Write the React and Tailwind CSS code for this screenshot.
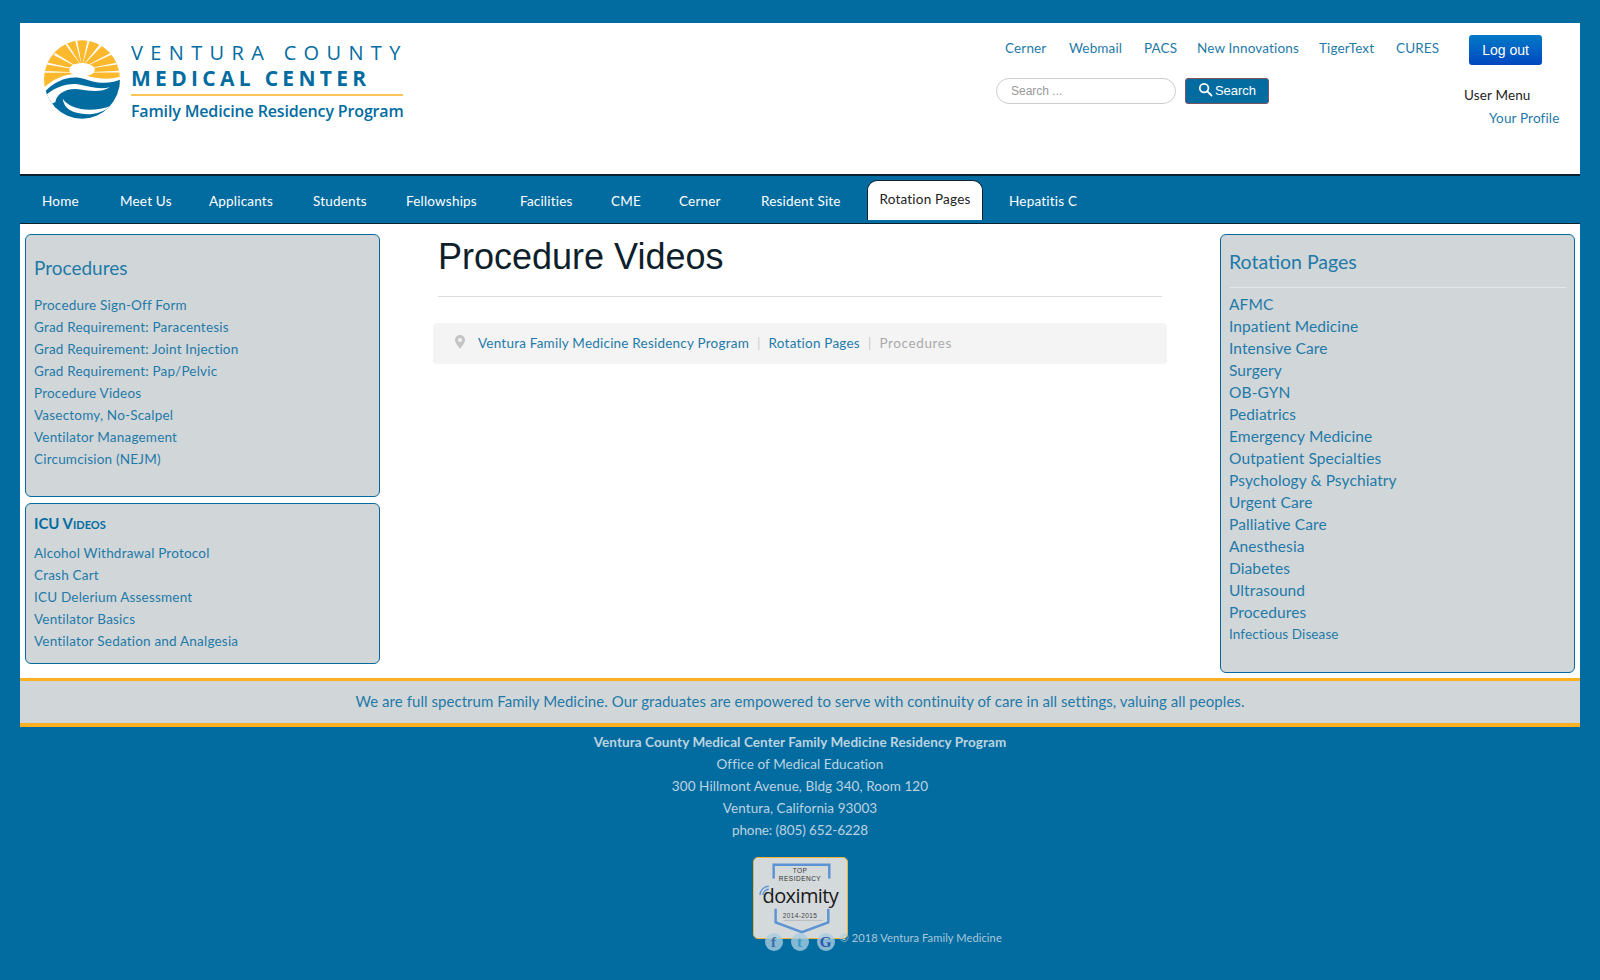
import React from "react";

const leftA = ["Procedure Sign-Off Form","Grad Requirement: Paracentesis","Grad Requirement: Joint Injection","Grad Requirement: Pap/Pelvic","Procedure Videos","Vasectomy, No-Scalpel","Ventilator Management","Circumcision (NEJM)"];
const leftB = ["Alcohol Withdrawal Protocol","Crash Cart","ICU Delerium Assessment","Ventilator Basics","Ventilator Sedation and Analgesia"];
const right = ["AFMC","Inpatient Medicine","Intensive Care","Surgery","OB-GYN","Pediatrics","Emergency Medicine","Outpatient Specialties","Psychology & Psychiatry","Urgent Care","Palliative Care","Anesthesia","Diabetes","Ultrasound","Procedures"];
const nav = [
  ["Home","w-[78px]"],["Meet Us","w-[89px]"],["Applicants","w-[104px]"],["Students","w-[93px]"],["Fellowships","w-[114px]"],
  ["Facilities","w-[91px]"],["CME","w-[68px]"],["Cerner","w-[82px]"],["Resident Site","w-[106px]"],
];

function Logo() {
  return (
    <svg viewBox="72 62 226 234" width="76" height="79" className="shrink-0">
      <defs>
        <clipPath id="c"><ellipse cx="185" cy="179" rx="113" ry="117" /></clipPath>
      </defs>
      <g clipPath="url(#c)">
        <rect x="70" y="60" width="230" height="240" fill="#fff" />
        <rect x="70" y="60" width="230" height="142" fill="#fdb92e" />
        <g fill="#fff">
          <ellipse cx="185" cy="150" rx="38" ry="20" />
          <path d="M185 140L132 70L138 67Z" />
          <path d="M185 140L164 60L170 60Z" />
          <path d="M185 140L202 60L208 62Z" />
          <path d="M185 140L240 72L246 77Z" />
          <path d="M185 145L270 100L274 105Z" />
          <path d="M185 150L295 128L297 133Z" />
          <path d="M185 150L105 100L101 106Z" />
          <path d="M185 152L78 128L76 134Z" />
          <path d="M185 158L298 153L298 158Z" />
          <path d="M185 158L72 154L72 159Z" />
        </g>
        <path d="M70 205C105 172 150 155 195 166C228 176 265 182 298 170L298 190L70 220Z" fill="#fff" />
        <path d="M78 212C108 182 150 164 195 178C228 190 265 194 298 180L298 300L60 300Z" fill="#026ca1" />
        <path d="M70 234C98 202 140 190 172 193C205 198 232 210 268 202C236 222 200 210 165 207C130 207 108 226 106 246L70 264Z" fill="#fff" />
        <path d="M128 236C148 268 212 280 274 256C240 284 200 286 170 278C145 272 130 258 128 236Z" fill="#fff" />
      </g>
    </svg>
  );
}

function Panel({ className, children }) {
  return <div className={"rounded-[6px] border border-[#026ca1] bg-[#d1d6d9] " + className}>{children}</div>;
}

function SearchIcon() {
  return (
    <svg width="15" height="15" viewBox="0 0 16 16" fill="none" stroke="#fff" strokeWidth="1.9" strokeLinecap="round" className="mt-[-3px]">
      <circle cx="6.5" cy="6.5" r="4.6" />
      <path d="M10 10l4.4 4.4" />
    </svg>
  );
}

function Doximity() {
  return (
    <div className="relative h-[82px] w-[95px] overflow-hidden rounded-[5px] border border-[#f0b33c] bg-[#d4d9dc]">
      <svg viewBox="0 0 95 82" width="93" height="80" className="absolute left-0 top-0">
        <path d="M20 21V7H77V21" fill="none" stroke="#5b93d3" strokeWidth="2.5" />
        <path d="M22 52V66L49 76L76 66V52" fill="none" stroke="#5b93d3" strokeWidth="2.5" />
        <path d="M6 38a9 9 0 0 1 9-9" fill="none" stroke="#5b93d3" strokeWidth="1.4" />
        <path d="M9 38a6 6 0 0 1 6-6" fill="none" stroke="#5b93d3" strokeWidth="1.4" />
        <path d="M30 64H70" stroke="#aeb4b8" strokeWidth="0.8" />
      </svg>
      <div className="absolute left-0 right-0 top-[9px] text-center font-['Liberation_Sans',sans-serif] text-[6.5px] leading-[7.5px] tracking-[0.5px] text-[#333]">
        <div>TOP</div>
        <div>RESIDENCY</div>
      </div>
      <div className="absolute left-[9px] top-[26px] font-['Open_Sans',sans-serif] text-[20px] font-medium leading-[24px] tracking-[-0.6px] text-[#1a1a1a]">doximity</div>
      <div className="absolute left-0 right-0 top-[54px] text-center font-['Liberation_Sans',sans-serif] text-[6.5px] leading-[8px] tracking-[0.4px] text-[#444]">2014-2015</div>
    </div>
  );
}

function Social({ children, cls }) {
  return (
    <div className={"flex h-[18px] w-[18px] items-center justify-center rounded-full bg-[#a9cce0]/80 font-['Liberation_Serif',serif] text-[15px] font-bold leading-none " + cls}>
      {children}
    </div>
  );
}

export default function App() {
  return (
    <div className="min-h-[980px] bg-[#026ca1] px-[20px] pt-[23px] font-['Lato',sans-serif] text-[#1f7aa8]">
      {/* header */}
      <header className="flex h-[153px] border-b-2 border-[#0b2233] bg-white">
        <div className="flex h-fit w-[976px] pl-[24px] pt-[17px]">
          <Logo />
          <div className="ml-[11px] mt-[1px] w-[272px] text-[#026ca1]">
            <div className="whitespace-nowrap font-['Open_Sans',sans-serif] text-[20px] leading-[24px] tracking-[7.35px]">VENTURA COUNTY</div>
            <div className="whitespace-nowrap font-['Open_Sans',sans-serif] text-[21px] font-bold leading-[26px] tracking-[4.3px]">MEDICAL CENTER</div>
            <div className="mt-[3px] h-[2px] w-[272px] bg-[#fdc45a]" />
            <div className="mt-[4px] whitespace-nowrap font-['Open_Sans',sans-serif] text-[16px] font-semibold leading-[22px] tracking-[-0.15px]">Family Medicine Residency Program</div>
          </div>
        </div>
        <div className="w-[468px] pt-[17px]">
          <div className="flex pl-[9px] text-[13.5px] leading-[16px] tracking-[0.15px]">
            <a className="w-[64px]">Cerner</a>
            <a className="w-[75px]">Webmail</a>
            <a className="w-[53px]">PACS</a>
            <a className="w-[122px]">New Innovations</a>
            <a className="w-[77px]">TigerText</a>
            <a>CURES</a>
          </div>
          <div className="mt-[22px] flex items-center font-['Liberation_Sans',sans-serif]">
            <input
              placeholder="Search ..."
              readOnly
              className="h-[26px] w-[180px] rounded-full border border-[#ccc] bg-white pl-[14px] text-[12px] text-[#333] outline-none placeholder:text-[#999]"
            />
            <button className="ml-[9px] flex h-[26px] w-[84px] items-center justify-center gap-[2px] rounded-[3px] border border-[#7a5560] bg-[#026ca1] text-[13px] text-white">
              <SearchIcon />
              Search
            </button>
          </div>
        </div>
        <div className="flex-1 pt-[12px] tracking-[0.15px]">
          <button className="ml-[5px] h-[30px] w-[73px] rounded-[3px] bg-gradient-to-b from-[#0679c6] to-[#0046c0] font-['Liberation_Sans',sans-serif] text-[14px] tracking-normal text-white">Log out</button>
          <div className="mt-[22px] text-[13.5px] leading-[16px] text-[#222]">User Menu</div>
          <div className="ml-[25px] mt-[7px] text-[13.5px] leading-[16px]">Your Profile</div>
        </div>
      </header>

      {/* nav */}
      <nav className="flex h-[48px] items-center border-b border-[#0b2233] pl-[22px] text-[13.5px] tracking-[0.2px] text-white">
        {nav.map(([t, w]) => (
          <a key={t} className={"whitespace-nowrap pt-[3px] " + w}>{t}</a>
        ))}
        <a className="flex h-[40px] w-[116px] items-center justify-center rounded-t-[10px] border border-b-0 border-[#0b2233] bg-white pb-[1px] text-[#222]">Rotation Pages</a>
        <a className="ml-[26px] pt-[3px]">Hepatitis C</a>
      </nav>

      {/* body */}
      <div className="flex h-[454px] bg-white px-[5px] pt-[10px]">
        <aside className="w-[355px]">
          <Panel className="h-[263px] px-[8px] pt-[20px]">
            <h3 className="text-[19px] leading-[26px]">Procedures</h3>
            <ul className="mt-[13px] text-[13.5px] leading-[22px] tracking-[0.2px]">
              {leftA.map((t) => <li key={t}>{t}</li>)}
            </ul>
          </Panel>
          <Panel className="mt-[6px] h-[161px] px-[8px] pt-[8px]">
            <h3 className="text-[15px] font-bold leading-[22px] text-[#026ca1] [font-variant:small-caps]">ICU Videos</h3>
            <ul className="mt-[8px] text-[13.5px] leading-[22px] tracking-[0.2px]">
              {leftB.map((t) => <li key={t}>{t}</li>)}
            </ul>
          </Panel>
        </aside>

        <main className="ml-[53px] w-[734px]">
          <div className="mx-[5px] border-b border-[#ddd] pb-[17px]">
            <h1 className="font-['Liberation_Sans',sans-serif] text-[36px] leading-[45px] text-[#0e1f2b]">Procedure Videos</h1>
          </div>
          <div className="mt-[26px] flex h-[41px] items-center rounded-[4px] bg-[#f4f4f4] pl-[22px] text-[13.5px] tracking-[0.22px]">
            <svg width="10" height="14" viewBox="0 0 10 14" fill="#c4c4c4" className="mt-[-3px]">
              <path d="M5 0a5 5 0 0 1 5 5c0 3-3 6-5 9-2-3-5-6-5-9a5 5 0 0 1 5-5zm0 3a2 2 0 1 0 0 4 2 2 0 0 0 0-4z" />
            </svg>
            <a className="ml-[13px]">Ventura Family Medicine Residency Program</a>
            <span className="mx-[8px] text-[#ccc]">|</span>
            <a>Rotation Pages</a>
            <span className="mx-[8px] text-[#ccc]">|</span>
            <span className="tracking-[0.6px] text-[#aaa]">Procedures</span>
          </div>
        </main>

        <aside className="ml-[53px] w-[355px]">
          <Panel className="h-[439px] px-[8px] pt-[14px]">
            <div className="border-b border-[#e4e7e9] pb-[12px]">
              <h3 className="text-[19.5px] leading-[26px]">Rotation Pages</h3>
            </div>
            <ul className="mt-[5px] text-[15.5px] leading-[22px] tracking-[0.1px]">
              {right.map((t) => <li key={t}>{t}</li>)}
              <li className="text-[13.5px]">Infectious Disease</li>
            </ul>
          </Panel>
        </aside>
      </div>

      {/* tagline */}
      <div className="flex h-[49px] items-center justify-center border-b-4 border-t-[3px] border-[#fdb022] bg-[#d1d6d9] pb-[1px] text-[15px] tracking-[0.05px]">
        We are full spectrum Family Medicine. Our graduates are empowered to serve with continuity of care in all settings, valuing all peoples.
      </div>

      {/* footer */}
      <footer className="flex flex-col items-center pt-[4px] text-[13.5px] leading-[22px] tracking-[0.08px] text-[#bcd3e0]">
        <div className="font-bold">Ventura County Medical Center Family Medicine Residency Program</div>
        <div>Office of Medical Education</div>
        <div>300 Hillmont Avenue, Bldg 340, Room 120</div>
        <div>Ventura, California 93003</div>
        <div className="tracking-[-0.1px]">phone: (805) 652-6228</div>
        <div className="relative mt-[16px]">
          <Doximity />
          <div className="absolute left-[12px] top-[76px] flex gap-[8px]">
            <Social cls="text-[#3b6ca8]">f</Social>
            <Social cls="text-[#2f9fc8]">t</Social>
            <Social cls="text-[#2a55b0]">G</Social>
          </div>
          <div className="absolute left-[87px] top-[70px] whitespace-nowrap text-[11.1px] text-[#a9c8da]">© 2018 Ventura Family Medicine</div>
        </div>
      </footer>
    </div>
  );
}
